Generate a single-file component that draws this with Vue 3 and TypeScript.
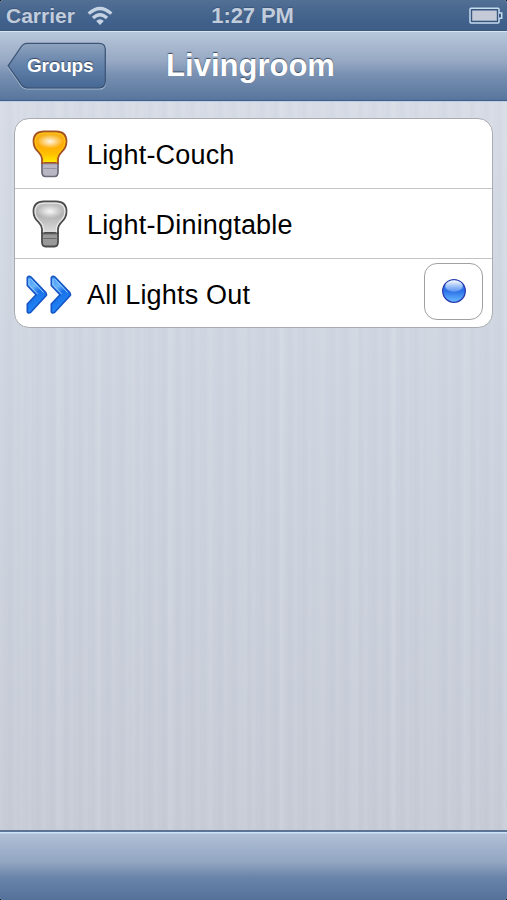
<script setup lang="ts">
interface Row {
  label: string
  icon: 'on' | 'off' | 'scene'
}

const rows: Row[] = [
  { label: 'Light-Couch', icon: 'on' },
  { label: 'Light-Diningtable', icon: 'off' },
  { label: 'All Lights Out', icon: 'scene' },
]
</script>

<template>
  <div class="screen">
    <header class="status">
      <div class="carrier">
        <span class="carrier-name">Carrier</span>
        <svg class="wifi" width="26" height="20" viewBox="0 0 26 20">
          <g fill="none" stroke="#c5d3e5" stroke-width="3.3">
            <path d="M1.7 7.6Q13-2.8 24.3 7.6" />
            <path d="M6 12Q13 5.4 20 12" />
          </g>
          <path d="M9.2 15Q13 11.4 16.8 15L13 19Z" fill="#c5d3e5" />
        </svg>
      </div>
      <span class="time">1:27 PM</span>
      <svg class="battery" width="34" height="18" viewBox="0 0 34 18">
        <rect x="1" y="1.3" width="29" height="14.6" rx="1" fill="#37577f" stroke="#c7dcef" stroke-width="1.5" />
        <rect x="3.2" y="3.5" width="24.6" height="10.2" fill="#c5cad9" />
        <path d="M30 6H32.7V11.2H30" fill="#37577f" stroke="#c7dcef" stroke-width="1.5" />
      </svg>
    </header>

    <nav class="nav">
      <button class="back">
        <svg class="back-shape" width="100" height="50" viewBox="0 0 100 50">
          <defs>
            <linearGradient id="back-fill" x1="0" y1="0" x2="0" y2="1">
              <stop offset="0" stop-color="#8fa3be" />
              <stop offset=".5" stop-color="#6381a9" />
              <stop offset="1" stop-color="#466894" />
            </linearGradient>
          </defs>
          <path d="M20 3.4H92Q98.3 3.4 98.3 9.4V41Q98.3 47 92 47H20Q16.5 47 14 43.5L1.2 25.2L14 7Q16.5 3.4 20 3.4Z" transform="translate(0 1)" fill="none" stroke="#a6bad4" stroke-width="1.2" />
          <path d="M20 2.4H92Q98.3 2.4 98.3 8.4V40Q98.3 46.8 92 46.8H20Q16.5 46.8 14 43.2L1.2 24.8L14 6Q16.5 2.4 20 2.4Z" fill="url(#back-fill)" stroke="#3d5577" stroke-width="1.3" />
        </svg>
        <span class="back-label">Groups</span>
      </button>
      <h1 class="title">Livingroom</h1>
    </nav>

    <main class="content">
      <ul class="list">
        <li v-for="row in rows" :key="row.label" class="row">
          <span class="icon">
            <svg v-if="row.icon !== 'scene'" class="bulb" width="38" height="50" viewBox="0 0 38 50">
              <defs>
                <linearGradient id="glass-on" x1="0" y1="0" x2="0" y2="1">
                  <stop offset="0" stop-color="#f5b420" />
                  <stop offset=".45" stop-color="#ffab05" />
                  <stop offset=".72" stop-color="#ffc000" />
                  <stop offset="1" stop-color="#fff000" />
                </linearGradient>
                <linearGradient id="glass-off" x1="0" y1="0" x2="0" y2="1">
                  <stop offset="0" stop-color="#c2c2c2" />
                  <stop offset=".45" stop-color="#b2b2b2" />
                  <stop offset=".75" stop-color="#cacaca" />
                  <stop offset="1" stop-color="#dedede" />
                </linearGradient>
                <radialGradient id="shine">
                  <stop offset="0" stop-color="#fff" stop-opacity=".9" />
                  <stop offset="1" stop-color="#fff" stop-opacity="0" />
                </radialGradient>
              </defs>
              <g v-if="row.icon === 'on'">
                <path d="M11 34H27V43Q27 47.5 23.5 47.5H14.5Q11 47.5 11 43Z" fill="#b7b6c2" stroke="#6b6978" stroke-width="1.7" />
                <path d="M11 34V30Q11 26.8 7.5 23.2Q2.5 18.5 2.5 12.5Q2.5 2.5 13 2.5H25Q35.5 2.5 35.5 12.5Q35.5 18.5 30.5 23.2Q27 26.8 27 30V34Z" fill="url(#glass-on)" stroke="#a35227" stroke-width="1.8" />
                <path d="M12.6 33.5V30Q12.6 26 8.7 22.1Q4.1 17.8 4.1 12.5Q4.1 4.1 13 4.1H25Q33.9 4.1 33.9 12.5Q33.9 17.8 29.3 22.1Q25.4 26 25.4 30V33.5" fill="none" stroke="#ffc80c" stroke-width="1" />
                <path d="M12 35H26M12.4 39.5H25.6" stroke="#96949f" />
              </g>
              <g v-else>
                <path d="M11 34H27V43Q27 47.5 23.5 47.5H14.5Q11 47.5 11 43Z" fill="#999" stroke="#4b4b4b" stroke-width="1.8" />
                <path d="M11 34V30Q11 26.8 7.5 23.2Q2.5 18.5 2.5 12.5Q2.5 2.5 13 2.5H25Q35.5 2.5 35.5 12.5Q35.5 18.5 30.5 23.2Q27 26.8 27 30V34Z" fill="url(#glass-off)" stroke="#4c4c4c" stroke-width="1.8" />
                <path d="M12.6 33.5V30Q12.6 26 8.7 22.1Q4.1 17.8 4.1 12.5Q4.1 4.1 13 4.1H25Q33.9 4.1 33.9 12.5Q33.9 17.8 29.3 22.1Q25.4 26 25.4 30V33.5" fill="none" stroke="#e7e7e7" stroke-width="1.2" />
                <path d="M12 35H26M12.4 39.5H25.6" stroke="#6c6c6c" />
              </g>
              <ellipse cx="19" cy="12.5" rx="13" ry="7" fill="url(#shine)" />
            </svg>
            <svg v-else class="arrows" width="48" height="42" viewBox="0 0 48 42">
              <defs>
                <linearGradient id="arrow-fill" x1="0" y1="0" x2=".35" y2="1">
                  <stop offset="0" stop-color="#3f98f3" />
                  <stop offset=".35" stop-color="#68b3fa" />
                  <stop offset=".55" stop-color="#1970e8" />
                  <stop offset="1" stop-color="#2389f8" />
                </linearGradient>
              </defs>
              <g v-for="shift in [0, 24]" :key="shift" :transform="`translate(${shift} 0)`">
                <path d="M2.3 3.6Q3.6 1.4 6 3.1L21 18.8Q22 20.5 21 21.8L6.2 37.8Q3.4 40 2.3 37.8V30L11 20.8L2.3 11.5Z" fill="url(#arrow-fill)" stroke="#1555c5" stroke-width="1.6" stroke-linejoin="round" />
                <path d="M4 4.8V10.8L12.8 20.2M5.5 4.6L18.5 18.5" fill="none" stroke="#94cbff" stroke-width="1" />
              </g>
            </svg>
          </span>
          <span class="label">{{ row.label }}</span>
          <button v-if="row.icon === 'scene'" class="trigger" aria-label="Run">
            <svg width="26" height="26" viewBox="0 0 26 26">
              <defs>
                <linearGradient id="ball" x1="0" y1="0" x2="0" y2="1">
                  <stop offset="0" stop-color="#4588ec" />
                  <stop offset=".5" stop-color="#2c70e8" />
                  <stop offset="1" stop-color="#68bdff" />
                </linearGradient>
                <linearGradient id="ball-shine" x1="0" y1="0" x2="0" y2="1">
                  <stop offset="0" stop-color="#fff" />
                  <stop offset="1" stop-color="#8dbafa" stop-opacity=".5" />
                </linearGradient>
              </defs>
              <circle cx="13" cy="13" r="11.3" fill="url(#ball)" stroke="#293aae" stroke-width="1.3" />
              <ellipse cx="13" cy="8" rx="8.8" ry="5.8" fill="url(#ball-shine)" />
            </svg>
          </button>
        </li>
      </ul>
    </main>

    <footer class="toolbar"></footer>
  </div>
</template>

<style>
body {
  background: #000;
}
</style>

<style scoped>
.screen {
  display: flex;
  flex-direction: column;
  height: 900px;
  overflow: hidden;
  border-radius: 3px;
  font-family: "Liberation Sans", Arial, sans-serif;
  background:
    repeating-linear-gradient(90deg, rgba(255, 255, 255, 0.05) 0 3px, transparent 4px 8px, rgba(110, 130, 155, 0.025) 9px 11px, transparent 12px 14px),
    repeating-linear-gradient(90deg, transparent 0 19px, rgba(255, 255, 255, 0.06) 21px 25px, transparent 27px 37px),
    linear-gradient(#d6dbe5 100px, #ced4df 400px, #c6cbd6 830px);
}

.status {
  display: grid;
  grid-template-columns: 1fr auto 1fr;
  align-items: center;
  flex: none;
  box-sizing: border-box;
  height: 31px;
  padding: 0 4px 0 6px;
  border-bottom: 1px solid #3d5a7d;
  background: linear-gradient(#526f94, #40618b 70%, #3e5e87);
  color: #c1ccdc;
  font-weight: bold;
  font-size: 22px;
  line-height: 30px;
  text-shadow: 0 -1px 1px #3c5576;
}

.carrier {
  display: flex;
  align-items: center;
  gap: 12px;
}

.carrier-name {
  font-size: 21px;
}

.time {
  padding: 1px 4px 0 0;
  letter-spacing: -0.1px;
}

.battery {
  justify-self: end;
}

.nav {
  display: grid;
  grid-template-columns: 1fr auto 1fr;
  align-items: center;
  flex: none;
  box-sizing: border-box;
  height: 70px;
  padding: 0 13px 0 7px;
  border-top: 1px solid #d8e4f1;
  border-bottom: 1px solid #3f5f88;
  background: linear-gradient(#b8c7da, #96a8c3 43%, #7890b1 63%, #58759d);
}

.back {
  display: grid;
  align-items: center;
  width: 100px;
  height: 50px;
  padding: 0;
  border: 0;
  background: none;
  color: #fff;
  font: bold 19px "Liberation Sans", Arial, sans-serif;
  text-align: left;
  text-shadow: 0 -1px 1px #34445b;
}

.back-shape,
.back-label {
  grid-area: 1 / 1;
}

.back-label {
  z-index: 1;
  padding: 0 0 0 20px;
  letter-spacing: -0.2px;
}

.title {
  margin: 0;
  color: #fff;
  font-size: 31px;
  line-height: 68px;
  text-shadow: 0 -1.5px 1px #3d4c62;
}

.content {
  flex: 1;
  padding: 16px 14px 0;
  border-top: 1px solid #bdcfe2;
}

.list {
  margin: 0;
  padding: 0;
  border: 1.5px solid #a8abb1;
  border-radius: 15px;
  background: #fff;
  list-style: none;
}

.row {
  display: flex;
  align-items: center;
  box-sizing: border-box;
  height: 70px;
  padding: 0 8px 0 9px;
}

.row:not(:last-child) {
  border-bottom: 1.5px solid #c4c4c4;
}

.row:last-child {
  height: 68px;
}

.icon {
  display: grid;
  flex: none;
  place-items: center;
  width: 50px;
  margin-right: 13px;
}

.icon svg,
.trigger svg {
  display: block;
}

.bulb {
  margin-left: 2px;
}

.arrows {
  margin-top: 3px;
}

.label {
  flex: 1;
  padding-top: 3px;
  color: #000;
  font-size: 27px;
  line-height: 32px;
  letter-spacing: 0.18px;
}

.trigger {
  display: grid;
  place-items: center;
  box-sizing: border-box;
  width: 59px;
  height: 57px;
  margin: 0 1px 4px 0;
  padding: 0;
  border: 1.5px solid #a0a0a0;
  border-radius: 13px;
  background: #fff;
}

.toolbar {
  flex: none;
  box-sizing: border-box;
  height: 70px;
  border-top: 2px solid #5c7595;
  background: linear-gradient(#cce2f6 0 1px, #afbfd5 2px, #93a6c2 44%, #6984a9 67%, #54719a);
}
</style>
